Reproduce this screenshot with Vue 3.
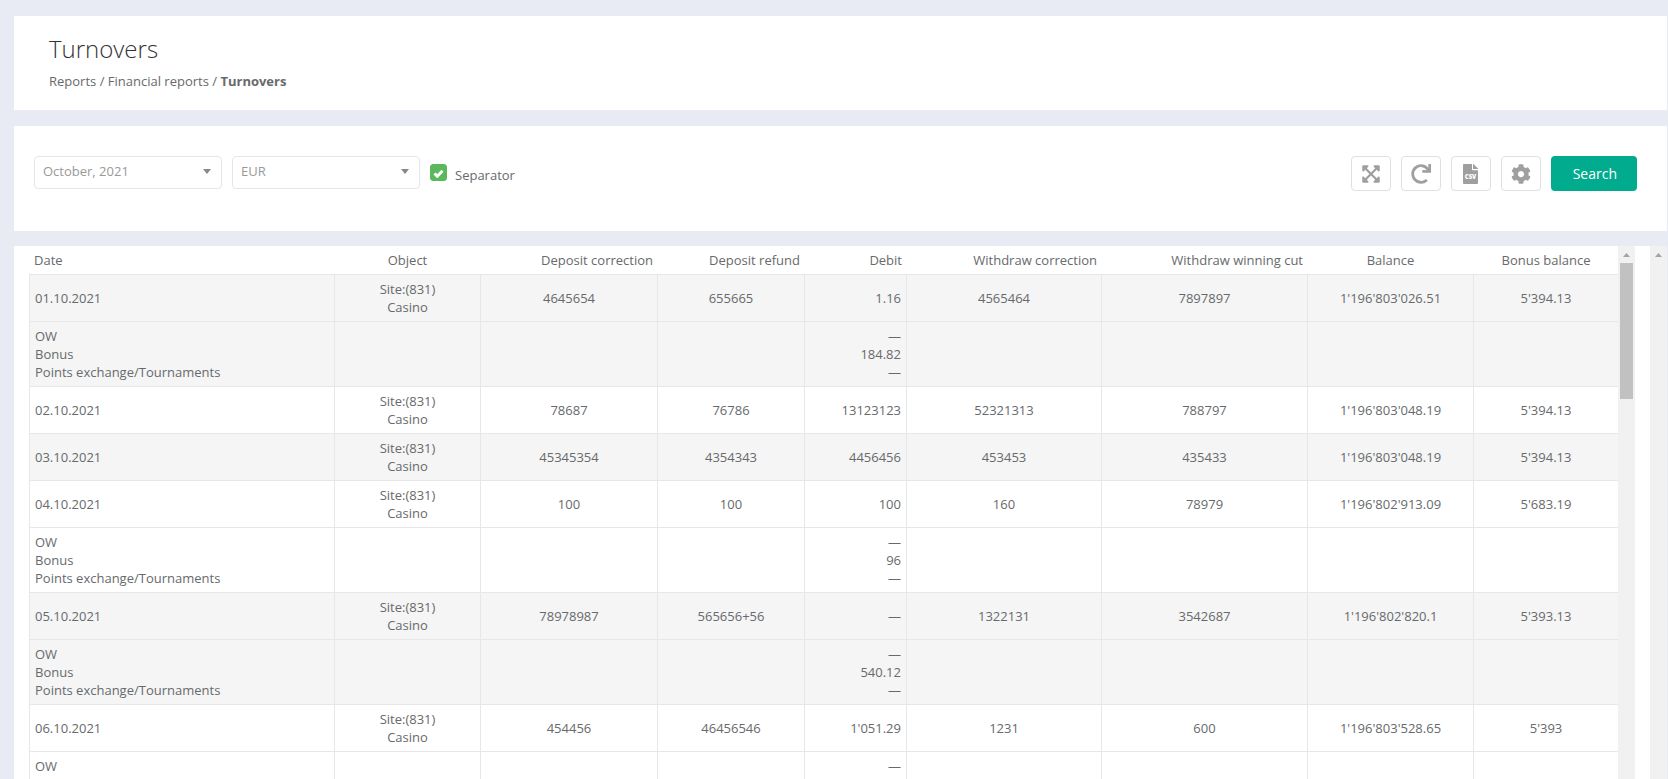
<template>
  <div class="page">
    <header class="panel page-head">
      <h1 class="title">Turnovers</h1>
      <nav class="breadcrumb" aria-label="Breadcrumb">
        <a href="#">Reports</a> / <a href="#">Financial reports</a> / <strong>Turnovers</strong>
      </nav>
    </header>

    <form class="panel filters" @submit.prevent>
      <!-- Month -->
      <div class="select-wrap">
        <select v-model="month" class="select" aria-label="Month">
          <option>October, 2021</option>
        </select>
        <svg class="caret" width="8" height="5" viewBox="0 0 8 5" aria-hidden="true"><path d="M0 0h8L4 5z" /></svg>
      </div>

      <!-- Currency -->
      <div class="select-wrap">
        <select v-model="currency" class="select" aria-label="Currency">
          <option>EUR</option>
        </select>
        <svg class="caret" width="8" height="5" viewBox="0 0 8 5" aria-hidden="true"><path d="M0 0h8L4 5z" /></svg>
      </div>

      <label class="check">
        <span class="check-box">
          <input v-model="separator" type="checkbox" />
          <svg v-if="separator" width="11" height="9" viewBox="0 0 11 9" aria-hidden="true">
            <path d="M1.500 4.500L4.300 7.200L9.500 1.800" />
          </svg>
        </span>
        <span>Separator</span>
      </label>

      <div class="actions">
        <button type="button" class="icon-btn" aria-label="Expand">
          <svg width="18" height="20" viewBox="0 0 448 512">
            <path d="M448 344v112a23.94 23.94 0 0 1-24 24H312c-21.39 0-32.09-25.9-17-41l36.2-36.2L224 295.6 116.77 402.9 153 439c15.09 15.1 4.39 41-17 41H24a23.94 23.94 0 0 1-24-24V344c0-21.4 25.89-32.1 41-17l36.19 36.2L184.46 256 77.18 148.7 41 185c-15.1 15.1-41 4.4-41-17V56a23.94 23.94 0 0 1 24-24h112c21.39 0 32.09 25.9 17 41l-36.2 36.2L224 216.4l107.23-107.3L295 73c-15.09-15.1-4.39-41 17-41h112a23.94 23.94 0 0 1 24 24v112c0 21.4-25.89 32.1-41 17l-36.19-36.2L263.54 256l107.28 107.3L407 327.1c15.1-15.2 41-4.5 41 16.9z" />
          </svg>
        </button>
        <button type="button" class="icon-btn" aria-label="Refresh">
          <svg width="20" height="20" viewBox="0 0 512 512">
            <path d="M500.33 0h-47.41a12 12 0 0 0-12 12.57l4 82.76A247.42 247.42 0 0 0 256 8C119.34 8 7.9 119.53 8 256.19 8.1 393.07 119.1 504 256 504a247.1 247.1 0 0 0 166.18-63.91 12 12 0 0 0 .48-17.43l-34-34a12 12 0 0 0-16.38-.55A176 176 0 1 1 402.1 157.8l-101.53-4.87a12 12 0 0 0-12.57 12v47.41a12 12 0 0 0 12 12h200.33a12 12 0 0 0 12-12V12a12 12 0 0 0-12-12z" />
          </svg>
        </button>
        <button type="button" class="icon-btn" aria-label="Export to CSV">
          <svg width="15" height="20" viewBox="0 0 15 20">
            <path d="M1 0h8v5.500a.8.8 0 0 0 .8.8H15V19a1 1 0 0 1-1 1H1a1 1 0 0 1-1-1V1a1 1 0 0 1 1-1z" />
            <path d="M10 0h.4L15 4.600V5h-5z" />
            <text class="csv" x="7.500" y="15" text-anchor="middle">CSV</text>
          </svg>
        </button>
        <button type="button" class="icon-btn" aria-label="Settings">
          <svg width="20" height="20" viewBox="0 0 512 512">
            <path d="M487.4 315.7l-42.6-24.6c4.3-23.2 4.3-47 0-70.2l42.6-24.6c4.9-2.8 7.1-8.6 5.5-14-11.1-35.6-30-67.8-54.7-94.6-3.8-4.1-10-5.1-14.8-2.3L380.8 110c-17.9-15.4-38.5-27.3-60.8-35.1V25.8c0-5.6-3.9-10.5-9.4-11.7-36.7-8.2-74.3-7.8-109.2 0-5.500 1.2-9.4 6.1-9.4 11.7V75c-22.2 7.9-42.8 19.8-60.8 35.1L88.7 85.5c-4.9-2.8-11-1.9-14.8 2.3-24.7 26.7-43.6 58.9-54.7 94.6-1.7 5.4.6 11.2 5.5 14L67.3 221c-4.3 23.2-4.3 47 0 70.2l-42.6 24.6c-4.9 2.8-7.1 8.6-5.5 14 11.1 35.6 30 67.8 54.7 94.6 3.8 4.1 10 5.1 14.8 2.3l42.6-24.6c17.9 15.4 38.5 27.3 60.8 35.1v49.2c0 5.6 3.9 10.5 9.4 11.7 36.7 8.2 74.3 7.8 109.2 0 5.5-1.2 9.4-6.1 9.4-11.7v-49.2c22.2-7.9 42.8-19.8 60.8-35.1l42.6 24.6c4.9 2.8 11 1.9 14.8-2.3 24.7-26.7 43.6-58.9 54.7-94.6 1.5-5.5-.7-11.3-5.6-14.1zM256 336c-44.1 0-80-35.9-80-80s35.9-80 80-80 80 35.9 80 80-35.9 80-80 80z" />
          </svg>
        </button>
        <button type="submit" class="search-btn">Search</button>
      </div>
    </form>

    <main class="panel report">
      <div class="report-body">
        <div class="table-scroll">
          <table class="table">
            <colgroup>
              <col v-for="col in columns" :key="col.key" :style="{ width: col.width + 'px' }" />
            </colgroup>
            <thead>
              <tr>
                <th v-for="col in columns" :key="col.key" scope="col" :class="col.head">{{ col.label }}</th>
              </tr>
            </thead>
            <tbody v-for="(day, i) in days" :key="day.date" :class="{ striped: i % 2 === 0 }">
              <tr>
                <td>{{ day.date }}</td>
                <td class="center">Site:(831)<br />Casino</td>
                <td v-for="(value, n) in day.values" :key="n" :class="columns[n + 2].cell">{{ value }}</td>
              </tr>
              <!-- Debit breakdown -->
              <tr v-if="day.split">
                <td><div v-for="name in splitNames" :key="name">{{ name }}</div></td>
                <td v-for="n in 3" :key="n"></td>
                <td class="right"><div v-for="(value, n) in day.split" :key="n">{{ value }}</div></td>
                <td v-for="n in 4" :key="n"></td>
              </tr>
            </tbody>
          </table>
        </div>
        <div class="scrollbar" aria-hidden="true">
          <svg class="scroll-arrow" width="7" height="4" viewBox="0 0 7 4"><path d="M3.500 0L7 4H0z" /></svg>
          <div class="scroll-thumb"></div>
        </div>
      </div>
      <div class="scrollbar" aria-hidden="true">
        <svg class="scroll-arrow" width="7" height="4" viewBox="0 0 7 4"><path d="M3.500 0L7 4H0z" /></svg>
      </div>
    </main>
  </div>
</template>

<script setup>
import { ref } from 'vue'

const month = ref('October, 2021')
const currency = ref('EUR')
const separator = ref(true)

const columns = [
  { key: 'date', label: 'Date', width: 305, head: '', cell: '' },
  { key: 'object', label: 'Object', width: 146, head: 'center', cell: 'center' },
  { key: 'depCorrection', label: 'Deposit correction', width: 177, head: 'right', cell: 'center' },
  { key: 'depRefund', label: 'Deposit refund', width: 147, head: 'right', cell: 'center' },
  { key: 'debit', label: 'Debit', width: 102, head: 'right', cell: 'right' },
  { key: 'wdCorrection', label: 'Withdraw correction', width: 195, head: 'right', cell: 'center' },
  { key: 'wdCut', label: 'Withdraw winning cut', width: 206, head: 'right', cell: 'center' },
  { key: 'balance', label: 'Balance', width: 166, head: 'center', cell: 'center' },
  { key: 'bonus', label: 'Bonus balance', width: 145, head: 'center', cell: 'center' }
]

const splitNames = ['OW', 'Bonus', 'Points exchange/Tournaments']

const days = [
  {
    date: '01.10.2021',
    values: ['4645654', '655665', '1.16', '4565464', '7897897', "1'196'803'026.51", "5'394.13"],
    split: ['—', '184.82', '—']
  },
  {
    date: '02.10.2021',
    values: ['78687', '76786', '13123123', '52321313', '788797', "1'196'803'048.19", "5'394.13"]
  },
  {
    date: '03.10.2021',
    values: ['45345354', '4354343', '4456456', '453453', '435433', "1'196'803'048.19", "5'394.13"]
  },
  {
    date: '04.10.2021',
    values: ['100', '100', '100', '160', '78979', "1'196'802'913.09", "5'683.19"],
    split: ['—', '96', '—']
  },
  {
    date: '05.10.2021',
    values: ['78978987', '565656+56', '—', '1322131', '3542687', "1'196'802'820.1", "5'393.13"],
    split: ['—', '540.12', '—']
  },
  {
    date: '06.10.2021',
    values: ['454456', '46456546', "1'051.29", '1231', '600', "1'196'803'528.65", "5'393"],
    split: ['—', '—', '—']
  }
]
</script>

<style>
body {
  background: #e8ebf4;
}
</style>

<style scoped>
.page {
  box-sizing: border-box;
  display: flex;
  flex-direction: column;
  height: 100vh;
  padding: 16px 1px 0 14px;
  font-family: "Open Sans", "Noto Sans", sans-serif;
  font-size: 13px;
  line-height: 18px;
  color: #676a6c;
}

.panel {
  background: #fff;
}

/* Heading */
.page-head {
  padding: 18px 35px 20px;
  margin-bottom: 16px;
}
.title {
  margin: 0 0 8px;
  font-size: 24px;
  font-weight: 300;
  line-height: 30px;
  color: #333;
}
.breadcrumb a {
  color: inherit;
  text-decoration: none;
}

/* Filters */
.filters {
  display: flex;
  align-items: flex-start;
  gap: 10px;
  padding: 30px 30px 40px 20px;
  margin-bottom: 15px;
}
.select-wrap {
  display: grid;
  align-items: center;
  width: 188px;
}
.select-wrap > * {
  grid-area: 1 / 1;
}
.select {
  appearance: none;
  width: 100%;
  height: 33px;
  padding: 0 24px 3px 8px;
  border: 1px solid #e5e6e7;
  border-radius: 4px;
  background: #fff;
  font: inherit;
  color: #999;
}
.caret {
  justify-self: end;
  margin: 0 11px 3px 0;
  fill: #888;
  pointer-events: none;
}
.check {
  display: flex;
  align-items: flex-start;
  gap: 8px;
  padding-top: 8px;
  line-height: 22px;
  cursor: pointer;
}
.check-box {
  display: grid;
  place-items: center;
}
.check-box > * {
  grid-area: 1 / 1;
}
.check-box input {
  appearance: none;
  width: 17px;
  height: 17px;
  margin: 0;
  border: 1px solid #ccc;
  border-radius: 3px;
}
.check-box input:checked {
  border-color: #5cb85c;
  background: #5cb85c;
}
.check-box svg {
  margin-top: 2px;
  fill: none;
  stroke: #fff;
  stroke-width: 3;
  pointer-events: none;
}

.actions {
  display: flex;
  gap: 10px;
  margin-left: auto;
}
.icon-btn {
  display: flex;
  align-items: center;
  justify-content: center;
  width: 40px;
  height: 35px;
  padding: 0;
  border: 1px solid #e0e0e0;
  border-radius: 4px;
  background: #fff;
  cursor: pointer;
}
.icon-btn svg {
  fill: #9f9f9f;
}
.icon-btn .csv {
  font-family: "Open Sans", sans-serif;
  font-size: 6px;
  font-weight: 800;
  fill: #fff;
}
.search-btn {
  height: 35px;
  padding: 0 20px 0 22px;
  border: 0;
  border-radius: 4px;
  background: #00ab8e;
  font: inherit;
  font-size: 14px;
  color: #fff;
  cursor: pointer;
}

/* Report */
.report {
  display: flex;
  flex: 1;
  gap: 15px;
  min-height: 0;
  padding-left: 15px;
}
.report-body {
  display: flex;
  flex: 1;
  min-width: 0;
}
.table-scroll {
  flex: 1;
  min-width: 0;
  overflow-y: auto;
  scrollbar-width: none;
}
.table {
  width: 100%;
  table-layout: fixed;
  border-collapse: separate;
  border-spacing: 0;
}
th,
td {
  padding: 5px;
  text-align: left;
  font-weight: 400;
}
th {
  padding-right: 4px;
}
td {
  border-top: 1px solid #e7e7e7;
  border-left: 1px solid #e7e7e7;
}
.striped td {
  background: #f5f5f5;
}
th.center,
td.center {
  text-align: center;
}
th.right,
td.right {
  text-align: right;
}

.scrollbar {
  display: flex;
  flex-direction: column;
  align-items: center;
  flex: none;
  width: 17px;
  background: #f1f1f1;
}
.scroll-arrow {
  margin: 7px 0 6px;
  fill: #a3a3a3;
}
.scroll-thumb {
  width: 13px;
  height: 136px;
  background: #c1c1c1;
}
</style>
